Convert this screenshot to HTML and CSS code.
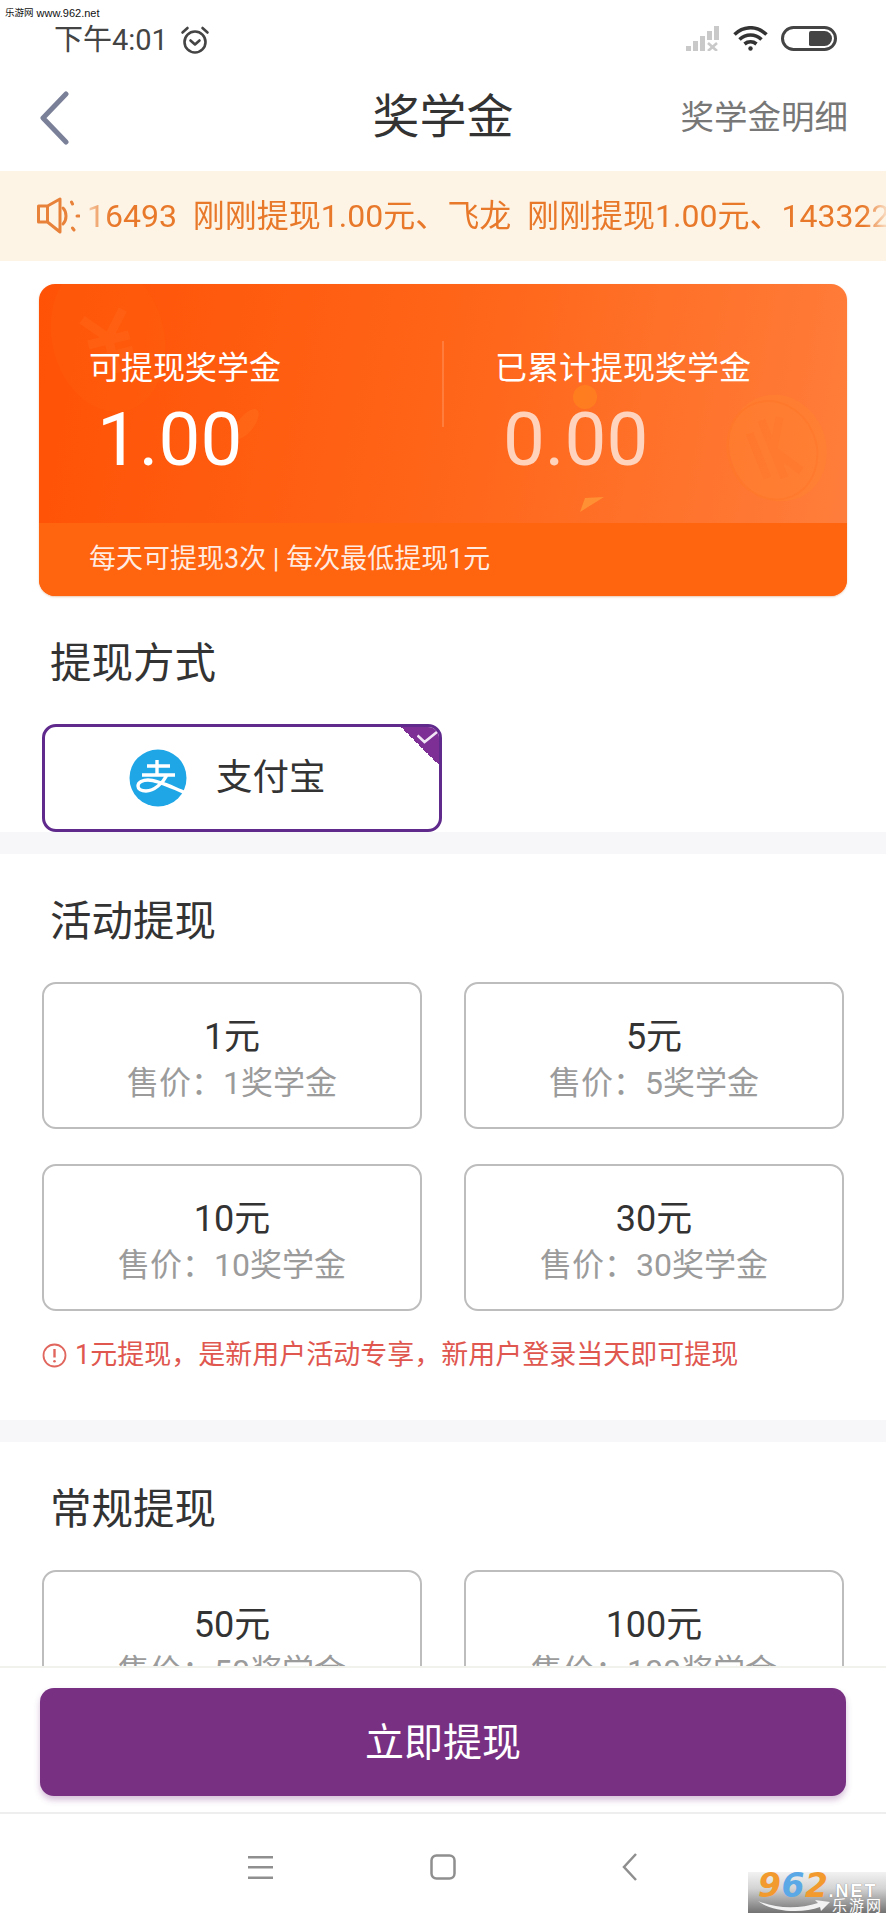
FILE: index.html
```html
<!DOCTYPE html>
<html lang="zh-CN">
<head>
	<meta charset="UTF-8">
	<title>奖学金</title>
	<link rel="stylesheet" href="styles.css">
</head>
<body>
	<div class="page">
		<div class="site-mark"><span class="site-mark-cn">乐游网</span>www.962.net</div>

		<div class="status">
			<div class="status-left">
				<span class="clock">下午4:01</span>
				<svg class="alarm" width="30" height="30" viewBox="0 0 30 30" fill="none" stroke="#444" stroke-width="2.600" stroke-linecap="round" stroke-linejoin="round">
					<circle cx="15" cy="17" r="10.500"/>
					<path d="M10.500 15.500l4.500 4 4.500-4"/>
					<path d="M2.500 7.500l5-4.500M27.500 7.500l-5-4.500"/>
				</svg>
			</div>
			<div class="status-right">
				<svg width="34" height="25" viewBox="0 0 34 25" fill="#c9c9c9">
					<rect x="0" y="20" width="5" height="5"/>
					<rect x="7" y="15" width="5" height="10"/>
					<rect x="14" y="10" width="5" height="15"/>
					<rect x="21" y="5" width="5" height="9"/>
					<rect x="28" y="0" width="5" height="14"/>
					<path d="M22 17l9 8M31 17l-9 8" stroke="#c9c9c9" stroke-width="2.600" fill="none"/>
				</svg>
				<svg width="35" height="25" viewBox="0 0 35 25" fill="none" stroke="#333" stroke-width="3.600">
					<path d="M1.500 8.500c9.500-9 22.500-9 32 0"/>
					<path d="M6.500 13.500c6.500-6 15.500-6 22 0"/>
					<path d="M11.500 18c3.500-2.800 8.500-2.800 12 0"/>
					<circle cx="17.500" cy="22.500" r="2.200" fill="#333" stroke="none"/>
				</svg>
				<div class="battery"><div class="battery-fill"></div></div>
			</div>
		</div>

		<div class="header">
			<svg class="back" width="30" height="54" viewBox="0 0 30 54" fill="none" stroke="#7b8099" stroke-width="5" stroke-linecap="round" stroke-linejoin="round">
				<path d="M27 3L4 27l23 24"/>
			</svg>
			<div class="header-title">奖学金</div>
			<div class="header-link">奖学金明细</div>
		</div>

		<div class="ticker">
			<svg class="ticker-icon" width="44" height="40" viewBox="0 0 44 40" fill="none" stroke="#e8823a" stroke-width="3" stroke-linecap="round" stroke-linejoin="round">
				<path d="M2.500 10h9v16h-9zM11.500 10L24 3v33L11.500 26"/>
				<path d="M27 12c4 4 4 12 0 16"/>
				<path d="M35.500 6l1 2M36.500 32l1.500 2M41 20h2"/>
			</svg>
			<div class="ticker-track">
				<div class="ticker-text">16493&nbsp; 刚刚提现1.00元、飞龙&nbsp; 刚刚提现1.00元、143322</div>
			</div>
		</div>

		<div class="scroll">
			<div class="balance">
				<svg class="balance-art" width="808" height="312" viewBox="0 0 808 312" fill="none">
					<g transform="rotate(-14 69 53)" opacity=".4">
						<ellipse cx="69" cy="53" rx="56" ry="76" fill="#ff6410" opacity=".6"/>
						<path d="M48 30l21 24 21-24M69 54v36M48 56h42M48 72h42" stroke="#ff6f20" stroke-width="9"/>
					</g>
					<g transform="rotate(-22 739 164)" opacity=".45">
						<ellipse cx="739" cy="164" rx="48" ry="54" fill="#ff8a2e" opacity=".7"/>
						<ellipse cx="733" cy="164" rx="44" ry="50" stroke="#ff7a24" stroke-width="2"/>
						<path d="M718 140v48M734 132v62M752 136l-18 28 18 30" stroke="#ff7a28" stroke-width="8"/>
					</g>
					<circle cx="546" cy="113" r="12" fill="#ff8a1e" opacity=".55"/>
					<path d="M541 228l24-15-19 1z" fill="#ff9636" opacity=".85"/>
					<ellipse cx="207" cy="140" rx="8" ry="18" transform="rotate(38 207 140)" fill="#ff7a20" opacity=".3"/>
				</svg>
				<div class="balance-top">
					<div class="balance-col">
						<div class="balance-label">可提现奖学金</div>
						<div class="balance-num">1.00</div>
					</div>
					<div class="balance-line"></div>
					<div class="balance-col balance-col-right">
						<div class="balance-label">已累计提现奖学金</div>
						<div class="balance-num balance-num-dim">0.00</div>
					</div>
				</div>
				<div class="balance-band">每天可提现3次 | 每次最低提现1元</div>
			</div>

			<div class="section">
				<div class="section-title">提现方式</div>
				<div class="pay">
					<svg class="pay-logo" width="58" height="58" viewBox="0 0 58 58" fill="none">
						<circle cx="29" cy="29" r="28.500" fill="#1fa6e6"/>
						<path d="M18 17h23M28 11v15M13 26h33M38 26c-4 8-13 16-21 16-5 0-8-2-8-5 0-4 5-6 10-6 10 0 23 7 38 13" stroke="#fff" stroke-width="3.400"/>
					</svg>
					<span class="pay-name">支付宝</span>
					<div class="pay-corner">
						<svg width="21" height="15" viewBox="0 0 21 15" fill="none" stroke="#f1e6f5" stroke-width="2.600">
							<path d="M0.500 4.500l7 6.500L20 1"/>
						</svg>
					</div>
				</div>
			</div>

			<div class="gap"></div>

			<div class="section">
				<div class="section-title">活动提现</div>
				<div class="grid">
					<div class="item"><div class="item-value">1元</div><div class="item-price">售价：1奖学金</div></div>
					<div class="item"><div class="item-value">5元</div><div class="item-price">售价：5奖学金</div></div>
					<div class="item"><div class="item-value">10元</div><div class="item-price">售价：10奖学金</div></div>
					<div class="item"><div class="item-value">30元</div><div class="item-price">售价：30奖学金</div></div>
				</div>
				<div class="note">
					<svg width="25" height="25" viewBox="0 0 25 25" fill="none" stroke="#e0665e" stroke-width="1.800">
						<circle cx="12.500" cy="12.500" r="11"/>
						<path d="M12.500 6v8.500" stroke-width="2.400"/>
						<circle cx="12.500" cy="18.300" r="1.300" fill="#e0665e" stroke="none"/>
					</svg>
					<span>1元提现，是新用户活动专享，新用户登录当天即可提现</span>
				</div>
			</div>

			<div class="gap"></div>

			<div class="section">
				<div class="section-title">常规提现</div>
				<div class="grid">
					<div class="item"><div class="item-value">50元</div><div class="item-price">售价：50奖学金</div></div>
					<div class="item"><div class="item-value">100元</div><div class="item-price">售价：100奖学金</div></div>
				</div>
			</div>
		</div>

		<div class="footer">
			<div class="submit">立即提现</div>
		</div>

		<div class="nav">
			<svg width="25" height="23" viewBox="0 0 25 23" fill="#8f8f8f">
				<rect x="0" y="0" width="25" height="2.500"/>
				<rect x="0" y="10" width="25" height="2.500"/>
				<rect x="0" y="20.500" width="25" height="2.500"/>
			</svg>
			<svg width="26" height="26" viewBox="0 0 26 26" fill="none" stroke="#8f8f8f" stroke-width="2.500">
				<rect x="1.500" y="1.500" width="23" height="23" rx="5"/>
			</svg>
			<svg class="nav-back" width="16" height="28" viewBox="0 0 16 28" fill="none" stroke="#8f8f8f" stroke-width="2.500">
				<path d="M14 1L2 14l12 13"/>
			</svg>
		</div>

		<div class="badge">
			<div class="badge-top"><span class="badge-digits"><span class="badge-or">9</span><span class="badge-bl">6</span><span class="badge-or">2</span></span><span class="badge-net">.NET</span></div>
			<div class="badge-bottom">
				<svg width="72" height="12" viewBox="0 0 72 12" fill="#f2f2f2">
					<path d="M0 1c18 8 42 8 60 2l-3-3 15 2-9 9-1-4C44 14 14 12 0 1z"/>
				</svg>
				<span class="badge-cn">乐游网</span>
			</div>
		</div>
	</div>
</body>
</html>
```

FILE: styles.css
```css
*{
	box-sizing:border-box;
}
html,body{
	margin:0;
	padding:0;
	background:#fff;
}
.page{
	position:relative;
	width:886px;
	height:1920px;
	display:flex;
	flex-direction:column;
	overflow:hidden;
	font-family:Roboto,"Noto Sans CJK SC",sans-serif;
	color:#333;
}
.site-mark{
	position:absolute;
	left:5px;
	top:5px;
	display:flex;
	gap:3px;
	font:11px/16px "Liberation Sans","Noto Sans CJK SC",sans-serif;
	color:#111;
}
.site-mark-cn{
	font-size:9.500px;
}

/* status bar */
.status{
	height:68px;
	flex:none;
	display:flex;
	align-items:flex-start;
	justify-content:space-between;
	padding:25px 49px 0 54px;
}
.status-left{
	display:flex;
	align-items:center;
	gap:12px;
	height:30px;
}
.clock{
	font-size:29px;
	line-height:30px;
	color:#444;
}
.status-right{
	display:flex;
	align-items:center;
	gap:13px;
	height:28px;
	margin-top:-1px;
}
.battery{
	width:56px;
	height:25px;
	border:3px solid #444;
	border-radius:13px;
	padding:2px;
	display:flex;
	justify-content:flex-end;
}
.battery-fill{
	width:23px;
	background:#444;
	border-radius:2px 8px 8px 2px;
}

/* title bar */
.header{
	height:103px;
	flex:none;
	display:flex;
	align-items:center;
	position:relative;
	padding:0 38px 4px 39px;
}
.back{
	flex:none;
}
.header-title{
	position:absolute;
	left:0;
	right:0;
	top:22px;
	text-align:center;
	font-size:47px;
	line-height:54px;
	color:#333;
}
.header-link{
	margin-left:auto;
	font-size:33.500px;
	line-height:46px;
	color:#777;
}

/* notice ticker */
.ticker{
	height:90px;
	flex:none;
	background:#fdf4e6;
	display:flex;
	align-items:center;
	padding-left:36px;
	color:#e8782a;
}
.ticker-icon{
	flex:none;
}
.ticker-track{
	flex:1;
	min-width:0;
	margin-left:7px;
	overflow:hidden;
	-webkit-mask-image:linear-gradient(90deg,rgba(0,0,0,.3),#000 24px,#000 calc(100% - 22px),rgba(0,0,0,.2));
	mask-image:linear-gradient(90deg,rgba(0,0,0,.3),#000 24px,#000 calc(100% - 22px),rgba(0,0,0,.2));
}
.ticker-text{
	white-space:nowrap;
	font-size:32px;
	line-height:44px;
}

/* scrolling content, cut off by the footer */
.scroll{
	flex:1;
	min-height:0;
	overflow:hidden;
}

/* balance card */
.balance{
	position:relative;
	overflow:hidden;
	width:808px;
	height:312px;
	margin:23px 0 0 39px;
	border-radius:16px;
	background:linear-gradient(100deg,#ff5206,#ff6518 50%,#ff7e3c);
	box-shadow:0 1px 2px rgba(200,120,60,.4);
	display:flex;
	flex-direction:column;
	color:#fff;
}
.balance-art{
	position:absolute;
	left:0;
	top:0;
}
.balance-top{
	position:relative;
	flex:1;
	display:flex;
}
.balance-col{
	width:404px;
	padding:61px 0 0 50px;
}
.balance-col-right{
	padding-left:51px;
}
.balance-label{
	font-size:32px;
	line-height:46px;
}
.balance-num{
	margin:6px 0 0 8px;
	font-size:74.500px;
	line-height:86px;
}
.balance-num-dim{
	color:rgba(255,255,255,.7);
}
.balance-line{
	width:2px;
	height:86px;
	margin-top:57px;
	flex:none;
	background:rgba(255,255,255,.16);
}
.balance-band{
	position:relative;
	height:73px;
	flex:none;
	background:#ff640f;
	padding-left:50px;
	font-size:27px;
	line-height:73px;
	color:rgba(255,255,255,.88);
}

/* sections */
.section{
	padding:43px 42px 0;
}
.section-title{
	margin:0 0 35px 8px;
	font-size:41.500px;
	line-height:50px;
	color:#333;
}
.gap{
	height:22px;
	background:#f7f7f9;
}
.pay{
	position:relative;
	width:400px;
	height:108px;
	border:3px solid #5f2a8c;
	border-radius:14px;
	overflow:hidden;
	display:flex;
	align-items:center;
	padding-left:84px;
}
.pay-logo{
	flex:none;
}
.pay-name{
	margin-left:29px;
	font-size:36.500px;
	line-height:46px;
	color:#333;
}
.pay-corner{
	position:absolute;
	right:0;
	top:0;
	width:38px;
	height:38px;
	background:linear-gradient(225deg,#7d2f95 50%,transparent 50%);
}
.pay-corner svg{
	position:absolute;
	right:1px;
	top:4px;
}
.grid{
	display:grid;
	grid-template-columns:380px 380px;
	column-gap:42px;
	row-gap:35px;
}
.item{
	height:147px;
	border:2px solid #bdbdbd;
	border-radius:14px;
	padding-top:30px;
	text-align:center;
}
.item-value{
	font-size:36px;
	line-height:46px;
	color:#333;
}
.item-price{
	font-size:32px;
	line-height:47px;
	color:#9b9b9b;
}
.note{
	display:flex;
	align-items:center;
	gap:8px;
	height:44px;
	margin:22px 0 43px;
	font-size:27px;
	line-height:44px;
	color:#e0574f;
}
.note svg{
	flex:none;
}

/* bottom button */
.footer{
	height:148px;
	flex:none;
	border-top:2px solid #f2f2ec;
	border-bottom:2px solid #eeeeee;
	background:#fff;
	padding:20px 40px 0;
}
.submit{
	height:108px;
	border-radius:14px;
	background:#783082;
	box-shadow:0 4px 6px rgba(120,48,130,.3);
	text-align:center;
	font-size:39px;
	line-height:110px;
	color:#fff;
}

/* android nav bar */
.nav{
	height:106px;
	flex:none;
	display:flex;
	align-items:center;
	justify-content:center;
	gap:157px;
}
.nav-back{
	margin-left:9px;
}

/* site watermark */
.badge{
	position:absolute;
	right:0;
	top:1872px;
	width:138px;
	height:41px;
	background:linear-gradient(180deg,#f2f2f2,#d4d4d4 40%,#727272);
	padding:1px 0 0 10px;
	font-family:"Liberation Sans","Noto Sans CJK SC",sans-serif;
}
.badge-top{
	display:flex;
	align-items:baseline;
	height:26px;
}
.badge-digits{
	font:italic bold 33px/26px "DejaVu Sans",sans-serif;
	letter-spacing:.5px;
}
.badge-or{
	color:#f29a2e;
}
.badge-bl{
	color:#5aa9e6;
}
.badge-net{
	font-size:18px;
	line-height:26px;
	font-weight:bold;
	letter-spacing:2px;
	color:#fff;
	text-shadow:0 0 1px #666;
}
.badge-bottom{
	display:flex;
	align-items:center;
	height:13px;
}
.badge-cn{
	margin-left:2px;
	font-size:15px;
	line-height:13px;
	letter-spacing:2px;
	color:#fff;
	white-space:nowrap;
}
```
